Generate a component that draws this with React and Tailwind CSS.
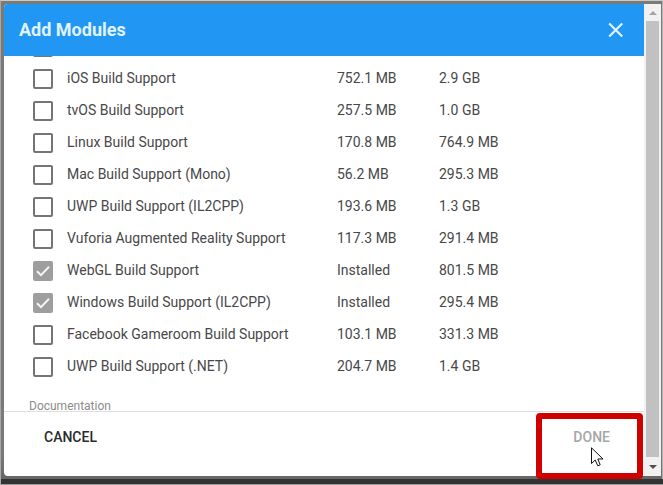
const modules = [
  { name: 'iOS Build Support', download: '752.1 MB', size: '2.9 GB' },
  { name: 'tvOS Build Support', download: '257.5 MB', size: '1.0 GB' },
  { name: 'Linux Build Support', download: '170.8 MB', size: '764.9 MB' },
  { name: 'Mac Build Support (Mono)', download: '56.2 MB', size: '295.3 MB' },
  { name: 'UWP Build Support (IL2CPP)', download: '193.6 MB', size: '1.3 GB' },
  { name: 'Vuforia Augmented Reality Support', download: '117.3 MB', size: '291.4 MB' },
  { name: 'WebGL Build Support', download: 'Installed', size: '801.5 MB', installed: true },
  { name: 'Windows Build Support (IL2CPP)', download: 'Installed', size: '295.4 MB', installed: true },
  { name: 'Facebook Gameroom Build Support', download: '103.1 MB', size: '331.3 MB' },
  { name: 'UWP Build Support (.NET)', download: '204.7 MB', size: '1.4 GB' },
];

function Header() {
  return (
    <header className="flex h-[52px] shrink-0 items-center justify-between rounded-tl-sm bg-[#2296f3] px-5 pl-[15px] text-[#e0f3ff]">
      <h1 className="text-lg font-bold">Add Modules</h1>
      <button type="button" aria-label="Close" className="grid size-4 place-items-center">
        <svg viewBox="0 0 16 16" className="size-4" fill="none" stroke="currentColor" strokeWidth="2.2">
          <path d="M1.2 1.5 L14.2 14.5 M14.2 1.5 L1.2 14.5" />
        </svg>
      </button>
    </header>
  );
}

function Tick({ id, label, installed }) {
  return (
    <span className="relative block size-5">
      <input
        id={id}
        type="checkbox"
        aria-label={label}
        defaultChecked={installed}
        disabled={installed}
        className="block size-5 appearance-none rounded-xs border-2 border-[#757575] checked:border-[#9e9e9e] checked:bg-[#9e9e9e]"
      />
      {installed && (
        <svg viewBox="0 0 20 20" className="pointer-events-none absolute inset-0 size-5" fill="none" stroke="#f5f5f5" strokeWidth="2">
          <path d="M4 10.3 L8 14.2 L16 5.8" />
        </svg>
      )}
    </span>
  );
}

function ModuleRow({ id, name, download, size, installed }) {
  return (
    <tr className="h-8">
      <td className="pt-px pl-[29px]">
        <Tick id={id} installed={installed} />
      </td>
      <td>
        <label htmlFor={id}>{name}</label>
      </td>
      <td>{download}</td>
      <td>{size}</td>
    </tr>
  );
}

function Footer() {
  return (
    <footer className="flex h-[65px] shrink-0 justify-between border-t border-[#dedede] pt-[7px] pr-[18px] pl-6 text-sm font-medium">
      <button type="button" className="h-9 px-4 text-[#2b2b2b]">CANCEL</button>
      <div className="relative h-9">
        <button type="button" disabled className="h-9 px-4 text-[#a6a6a6]">DONE</button>
        <div className="pointer-events-none absolute -top-1.5 -right-[17px] h-[66px] w-[107px] rounded-sm border-6 border-[#d00000]" />
        <svg viewBox="0 0 13 20" className="pointer-events-none absolute top-7 left-[34px] h-5 w-[13px]" fill="#fff" stroke="#101018" strokeWidth="1">
          <path d="M0.5 0.8 V16.5 L4.2 13 L6.8 18.8 L9.2 17.8 L6.8 12 H12 Z" />
        </svg>
      </div>
    </footer>
  );
}

function Scrollbar() {
  return (
    <div className="flex w-[17px] shrink-0 flex-col items-center bg-[#f1f1f1]">
      <div className="grid h-[17px] w-full place-items-center">
        <svg viewBox="0 0 8 4" className="h-1 w-2" fill="#a3a3a3">
          <path d="M0 4 L4 0 L8 4 Z" />
        </svg>
      </div>
      <div className="w-[13px] flex-1 bg-[#c1c1c1]" />
      <div className="grid h-[19px] w-full place-items-center">
        <svg viewBox="0 0 8 4" className="h-1 w-2" fill="#505050">
          <path d="M0 0 L4 4 L8 0 Z" />
        </svg>
      </div>
    </div>
  );
}

export default function App() {
  return (
    <div className="flex h-screen flex-col border-t border-b border-l border-t-[#c8ccc6] border-b-[#9a9a9a] border-l-[#a8a8a8] bg-[#333] font-[Roboto,sans-serif]">
      <div className="mb-[5px] flex min-h-0 flex-1 border-r border-[#b4b4b4] bg-[#7a7b79] bg-linear-to-t from-[#666] from-0% to-[#7a7b79] to-5% pt-[3px] pr-px pb-[3px] pl-[3px]">
        <div role="dialog" aria-label="Add Modules" className="flex min-w-0 flex-1 rounded-l-sm bg-white">
          <div className="flex min-w-0 flex-1 flex-col">
            <Header />
            <main className="flex min-h-0 flex-1 flex-col justify-end overflow-hidden">
              <table className="w-full shrink-0 table-fixed text-sm text-[#484848]">
                <colgroup>
                  <col className="w-[63px]" />
                  <col className="w-[270px]" />
                  <col className="w-[102px]" />
                  <col />
                </colgroup>
                <tbody>
                  <tr className="h-8">
                    <td colSpan={4} className="pt-px pl-[29px]">
                      <Tick id="module-android" label="Android Build Support" />
                    </td>
                  </tr>
                  {modules.map((m, i) => (
                    <ModuleRow key={m.name} id={`module-${i}`} {...m} />
                  ))}
                </tbody>
              </table>
              <h2 className="mt-[19px] shrink-0 pl-[25px] text-xs leading-[10px] text-[#8c8c8c]">Documentation</h2>
            </main>
            <Footer />
          </div>
          <Scrollbar />
        </div>
      </div>
    </div>
  );
}
